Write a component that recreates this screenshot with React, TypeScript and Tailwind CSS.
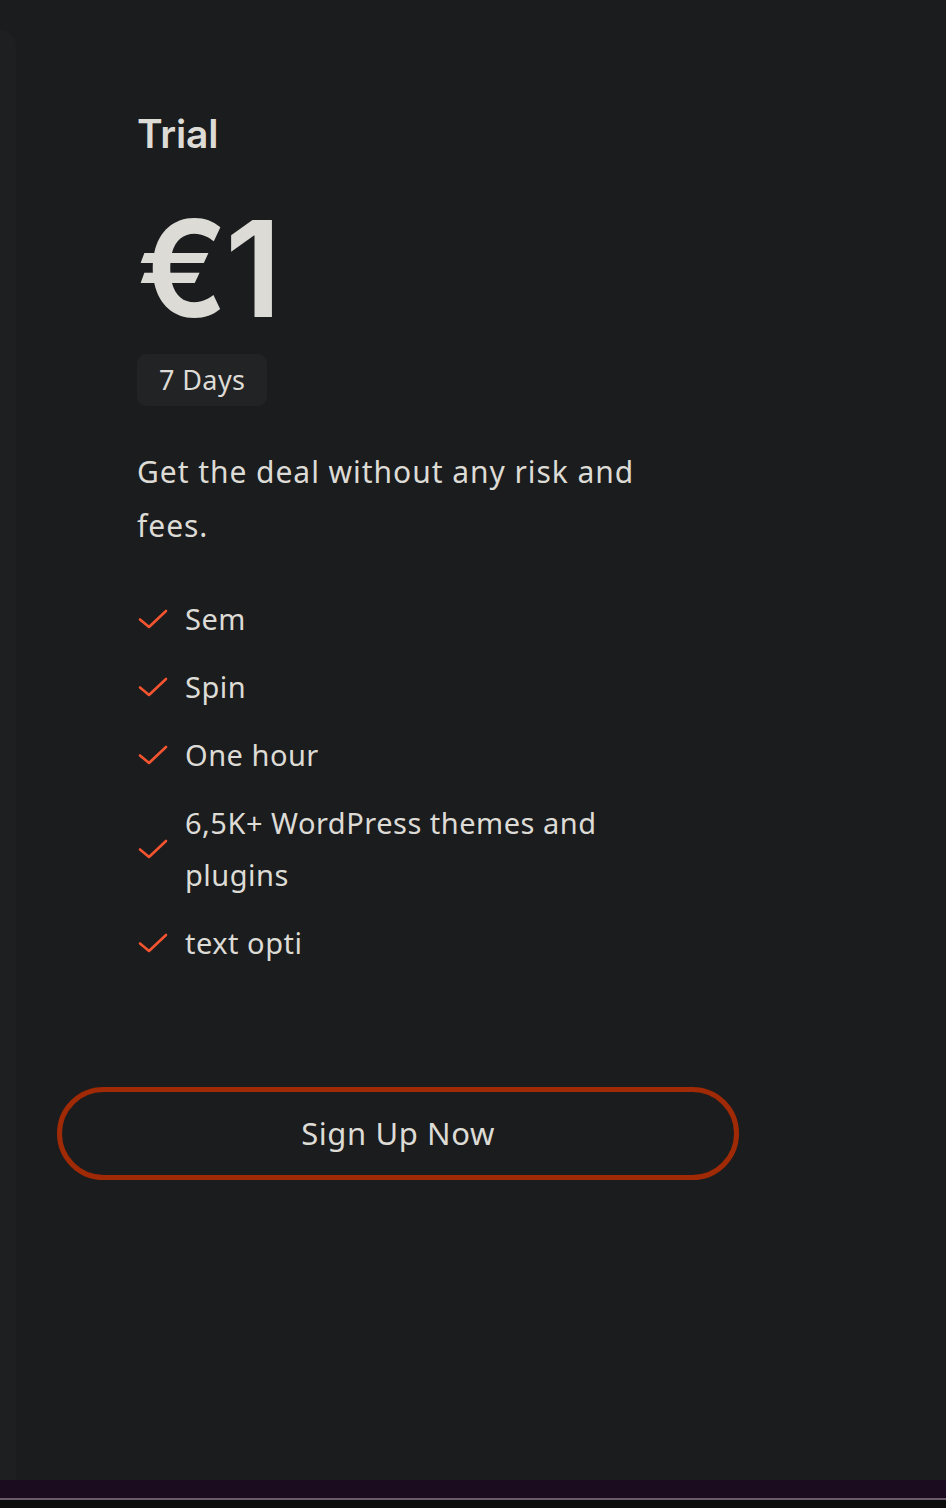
import React from "react";

const Check = () => (
  <svg width="32" height="22" viewBox="0 0 32 22" className="shrink-0" fill="none">
    <path d="M3 11.5 L12 19 L29 3" stroke="#f4542f" strokeWidth="2.6" strokeLinecap="round" strokeLinejoin="round" />
  </svg>
);

const features = ["Sem", "Spin", "One hour", "6,5K+ WordPress themes and plugins", "text opti"];

export default function App() {
  return (
    <div className="w-[946px] h-[1508px] bg-[#1b1c1e] flex flex-col overflow-hidden" style={{ fontFamily: "'Noto Sans', 'Open Sans', sans-serif" }}>
      <div className="flex-1 flex relative">
        <div className="w-[16px] mt-[30px] bg-[#1e1f21] rounded-tr-[16px]" />
        <div className="flex-1 flex flex-col pt-[108px] text-[#dddbd5]">
          <div className="pl-[121px] flex flex-col items-start">
            <h2 className="text-[39px] font-semibold leading-[52px] tracking-[-0.2px]" style={{ fontFamily: "Inter, 'Noto Sans', sans-serif" }}>Trial</h2>
            <div className="mt-[41px] text-[134px] font-semibold leading-[134px] tracking-[-3px] text-[#dcdbd6]" style={{ fontFamily: "Inter, 'Noto Sans', sans-serif" }}>€1</div>
            <div className="mt-[19px] h-[52px] px-[22px] flex items-center rounded-[9px] bg-[#222325] text-[27px] tracking-[0.4px]">7 Days</div>
            <p className="mt-[39px] w-[540px] text-[30px] leading-[54px] tracking-[0.95px]">Get the deal without any risk and fees.</p>
            <ul className="mt-[40px] flex flex-col gap-[16px] w-[520px]">
              {features.map((f) => (
                <li key={f} className="flex items-center gap-[16px]">
                  <Check />
                  <span className="text-[29px] leading-[52px] tracking-[0.5px] w-[450px]">{f}</span>
                </li>
              ))}
            </ul>
          </div>
          <div className="mt-[118px] pl-[41px]">
            <button className="w-[682px] h-[93px] rounded-full border-[5px] border-[#a02a06] text-[31px] tracking-[0.6px] text-[#dddbd5] flex items-center justify-center">Sign Up Now</button>
          </div>
        </div>
      </div>
      <div className="h-[18px] bg-[#1c0c1f]" />
      <div className="h-[2px] bg-[#6b5a6b]" />
      <div className="h-[8px] bg-[#0c0c0c]" />
    </div>
  );
}
